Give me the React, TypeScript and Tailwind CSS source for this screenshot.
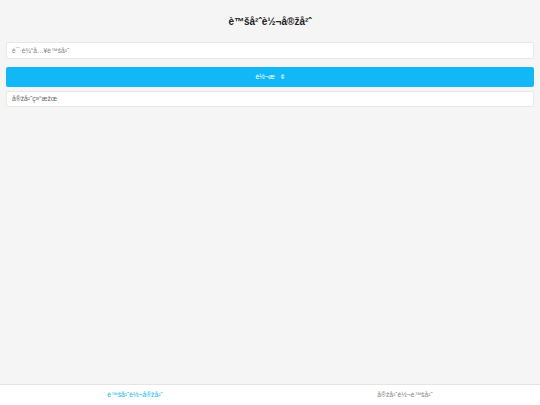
import { useState } from "react";

const TITLE = "è™šå²ˆè½¬å®žå²ˆ";
const PLACEHOLDER = "è¯·è¾“å…¥è™šå²ˆ";
const BTN = "è½¬æ\u008D¢";
const RESULT = "å®žå²ˆç»“æžœ";
const TAB_A = "è™šå²ˆè½¬å®žå²ˆ";
const TAB_B = "å®žå²ˆè½¬è™šå²ˆ";

export default function App() {
  const [tab, setTab] = useState(0);
  const [value, setValue] = useState("");

  return (
    <div className="flex h-[405px] w-[540px] flex-col bg-[#f5f5f5] font-['Liberation_Sans',Arial,sans-serif]">
      <main className="flex flex-1 flex-col px-[6px]">
        <h1 className="pt-[15px] pb-[13px] text-center text-[10px] font-bold leading-[14px] text-[#222]">{TITLE}</h1>

        <input
          value={value}
          onChange={(e) => setValue(e.target.value)}
          placeholder={PLACEHOLDER}
          className="h-[17px] w-full rounded-[2px] border border-[#e8e8e8] bg-white px-[5px] text-[6.7px] text-[#333] outline-none placeholder:text-[#888]"
        />

        <button className="mt-[8px] h-[20px] w-full rounded-[2px] bg-[#12b7f5] text-[6.7px] text-white">
          {BTN}
        </button>

        <div className="mt-[4px] flex h-[16px] items-center rounded-[2px] border border-[#e8e8e8] bg-white px-[5px] text-[6.7px] text-[#666]">
          {RESULT}
        </div>
      </main>

      <nav className="flex h-[21px] border-t border-[#e5e5e5] bg-white">
        {[TAB_A, TAB_B].map((t, i) => (
          <button
            key={i}
            onClick={() => setTab(i)}
            className={`flex flex-1 items-center justify-center text-[6.7px] ${tab === i ? "text-[#12b7f5]" : "text-[#888]"}`}
          >
            {t}
          </button>
        ))}
      </nav>
    </div>
  );
}
